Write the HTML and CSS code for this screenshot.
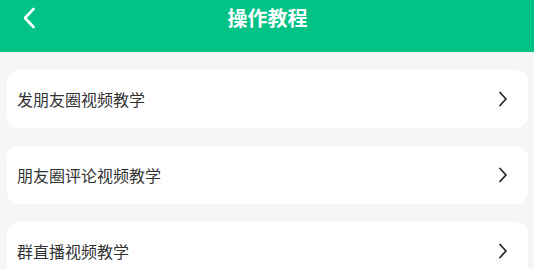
FILE: index.html
```html
<!DOCTYPE html>
<html lang="zh-CN">
<head>
<meta charset="utf-8">
<title>操作教程</title>
<link rel="stylesheet" href="styles.css">
</head>
<body>
<header class="topbar">
  <div class="topbar-row">
    <span class="back">
      <svg width="14" height="22" viewBox="0 0 14 22"><path d="M11.5 2 L3 11 L11.5 20" fill="none" stroke="#fff" stroke-width="2.6" stroke-linecap="round" stroke-linejoin="round"/></svg>
    </span>
    <h1 class="title">操作教程</h1>
    <span></span>
  </div>
</header>
<main class="list">
  <a class="item"><span class="label">发朋友圈视频教学</span><svg class="chev" width="10" height="16" viewBox="0 0 10 16"><path d="M2 1.5 L8 8 L2 14.5" fill="none" stroke="#2a2a2a" stroke-width="1.8" stroke-linecap="round" stroke-linejoin="round"/></svg></a>
  <a class="item"><span class="label">朋友圈评论视频教学</span><svg class="chev" width="10" height="16" viewBox="0 0 10 16"><path d="M2 1.5 L8 8 L2 14.5" fill="none" stroke="#2a2a2a" stroke-width="1.8" stroke-linecap="round" stroke-linejoin="round"/></svg></a>
  <a class="item"><span class="label">群直播视频教学</span><svg class="chev" width="10" height="16" viewBox="0 0 10 16"><path d="M2 1.5 L8 8 L2 14.5" fill="none" stroke="#2a2a2a" stroke-width="1.8" stroke-linecap="round" stroke-linejoin="round"/></svg></a>
</main>
</body>
</html>
```
FILE: styles.css
```css
html, body {
  margin: 0;
  padding: 0;
  background: #f6f6f5;
  font-family: "Noto Sans CJK SC", "Noto Sans", sans-serif;
}
.topbar {
  background: #03c286;
  height: 52px;
}
.topbar-row {
  display: grid;
  grid-template-columns: 1fr auto 1fr;
  align-items: center;
  height: 34px;
}
.back {
  display: flex;
  align-items: center;
  padding-left: 22px;
  height: 34px;
  padding-top: 1px;
}
.title {
  margin: 0;
  color: #fff;
  font-size: 20px;
  font-weight: 700;
  line-height: 34px;
  padding-left: 1px;
}
.list {
  display: flex;
  flex-direction: column;
  gap: 18px;
  padding: 18px 6px 0 7px;
}
.item {
  display: flex;
  align-items: center;
  justify-content: space-between;
  height: 58px;
  background: #fff;
  border-radius: 12px;
  padding: 0 20px 0 10px;
}
.label {
  font-size: 16px;
  color: #333;
}
.chev {
  display: block;
}
```
